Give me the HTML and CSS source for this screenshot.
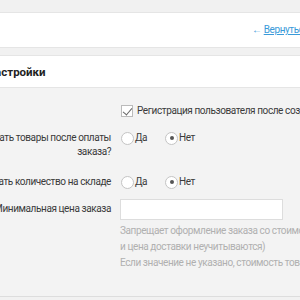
FILE: index.html
```html
<!DOCTYPE html>
<html lang="ru">
  <head>
    <meta charset="UTF-8" />
    <title>Настройки</title>
    <link rel="stylesheet" href="styles.css">
  </head>
  <body>
    <div class="page">
      <div class="topbar">
        <a href="#" class="back">&larr; <u>Вернуться к списку</u></a>
      </div>

      <div class="panel">
        <div class="panel-head">
          <h2>Настройки</h2>
        </div>

        <div class="panel-body">
          <div class="row row-first">
            <div class="label"></div>
            <div class="field">
              <label class="check">
                <span class="box checked"></span>
                Регистрация пользователя после создания заказа
              </label>
            </div>
          </div>

          <div class="row">
            <div class="label">Пересчитать товары после оплаты<br>заказа?</div>
            <div class="field">
              <label class="radio"><span class="dot"></span>Да</label>
              <label class="radio"><span class="dot on"></span>Нет</label>
            </div>
          </div>

          <div class="row row-stock">
            <div class="label">Показывать количество на складе</div>
            <div class="field">
              <label class="radio"><span class="dot"></span>Да</label>
              <label class="radio"><span class="dot on"></span>Нет</label>
            </div>
          </div>

          <div class="row row-price">
            <div class="label">Минимальная цена заказа</div>
            <div class="field">
              <input type="text" class="text-input" />
              <p class="desc">Запрещает оформление заказа со стоимостью товаров меньше указанной (скидки<br>и цена доставки неучитываются)</p>
              <p class="desc">Если значение не указано, стоимость товаров не проверяется</p>
            </div>
          </div>
        </div>
      </div>
    </div>
  </body>
</html>
```

FILE: styles.css
```css
* {
  margin: 0;
  padding: 0;
  box-sizing: border-box;
}

body {
  font-family: Roboto, "Liberation Sans", sans-serif;
  font-size: 10px;
  letter-spacing: -0.4px;
  line-height: 14px;
  color: #3a3a3a;
  background: #f1f1f1;
  overflow: hidden;
}

.page {
  width: 520px;
  margin: 12px 0 0 -100px;
}

.topbar {
  height: 36px;
  background: #fff;
  border-top: 1px solid #e5e5e5;
  border-bottom: 1px solid #e5e5e5;
  padding-left: 352px;
  display: flex;
  align-items: center;
}

.back {
  color: #3a9ad9;
  text-decoration: none;
  white-space: nowrap;
}

.panel {
  margin-top: 7px;
  border-bottom: 1px solid #ddd;
}

.panel-head {
  height: 33px;
  background: #fff;
  border-top: 1px solid #e5e5e5;
  border-bottom: 1px solid #e5e5e5;
  display: flex;
  align-items: center;
  padding-left: 87px;
}

.panel-head h2 {
  font-size: 11.5px;
  font-weight: 700;
  letter-spacing: 0;
  color: #222;
}

.panel-body {
  padding: 16px 0 25px;
  background: #f3f3f3;
}

.row {
  display: grid;
  grid-template-columns: 211px 1fr;
  column-gap: 9px;
  margin-top: 13px;
}

.row-first {
  margin-top: 0;
}

.row-stock {
  margin-top: 16px;
}

.row-price {
  margin-top: 10px;
}

.label {
  text-align: right;
  white-space: nowrap;
}

.row-price .label {
  padding-top: 3px;
}

.field {
  display: flex;
  flex-wrap: wrap;
  align-items: flex-start;
  white-space: nowrap;
}

.check {
  display: flex;
  align-items: center;
  gap: 4px;
  margin-left: 1px;
}

.box {
  width: 12px;
  height: 12px;
  border: 1px solid #bbb;
  background: #fff;
  position: relative;
}

.box.checked::after {
  content: "";
  position: absolute;
  left: 3px;
  top: 0;
  width: 4px;
  height: 8px;
  border-right: 1.5px solid #666;
  border-bottom: 1.5px solid #666;
  transform: rotate(40deg);
}

.radio {
  display: flex;
  align-items: center;
  gap: 1px;
  width: 43px;
  margin-left: 1px;
}

.dot {
  width: 13px;
  height: 13px;
  border-radius: 50%;
  border: 1px solid #c4c4c4;
  background: #fff;
  display: flex;
  align-items: center;
  justify-content: center;
}

.dot.on::after {
  content: "";
  width: 4px;
  height: 4px;
  border-radius: 50%;
  background: #555;
}

.text-input {
  width: 163px;
  height: 21px;
  border: 1px solid #ddd;
  background: #fff;
  margin-bottom: 2px;
}

.desc {
  color: #b0b0b0;
  width: 100%;
  line-height: 15.5px;
  margin-top: 1px;
}
```
